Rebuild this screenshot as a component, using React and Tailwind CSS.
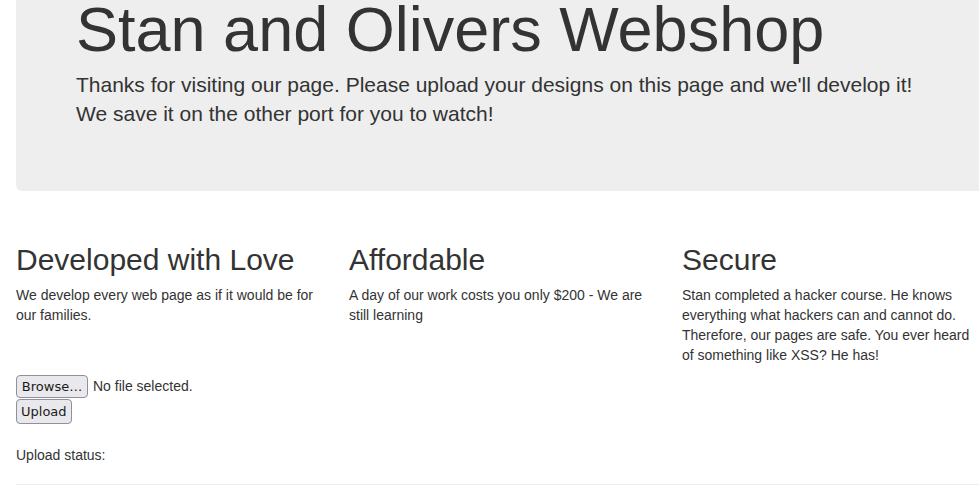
export default function App() {
  const features = [
    {
      title: "Developed with Love",
      text: "We develop every web page as if it would be for our families.",
    },
    {
      title: "Affordable",
      text: "A day of our work costs you only $200 - We are still learning",
    },
    {
      title: "Secure",
      text: "Stan completed a hacker course. He knows everything what hackers can and cannot do. Therefore, our pages are safe. You ever heard of something like XSS? He has!",
    },
  ];

  return (
    <div
      className="w-[979px] h-[486px] overflow-hidden bg-white text-[#333]"
      style={{ fontFamily: '"Liberation Sans", Arial, sans-serif' }}
    >
      <div className="ml-[16px] w-[970px]">
        {/* jumbotron, page is scrolled so its top is cut off */}
        <div className="-mt-[60px] rounded-[6px] bg-[#eeeeee] px-[60px] pt-[55px] pb-[48px]">
          <h1 className="m-0 text-[63px] leading-[1.1] font-normal mb-[6px]">
            Stan and Olivers Webshop
          </h1>
          <p className="m-0 text-[21px] leading-[29px] font-light mb-[15px]">
            Thanks for visiting our page. Please upload your designs on this page and we'll develop it!
            <br />
            We save it on the other port for you to watch!
          </p>
        </div>

        <div className="-mx-[15px] mt-[52px] grid grid-cols-[333px_333px_333px]">
          {features.map((f) => (
            <div key={f.title} className="px-[15px]">
              <h2 className="text-[30px] leading-[33px] font-normal mb-[9px]">{f.title}</h2>
              <p className="max-w-[300px] text-[14px] leading-[20px] mb-[10px]">{f.text}</p>
            </div>
          ))}
        </div>

        <form onSubmit={(e) => e.preventDefault()}>
          <div className="flex items-center h-[23px]">
            <button
              type="button"
              className="h-[23px] w-[72px] rounded-[4px] border border-[#8f8f9d] bg-[#e9e9ed] px-[4px] text-[13px] leading-none text-[#1b1b1b]"
              style={{ fontFamily: '"DejaVu Sans", sans-serif' }}
            >
              Browse…
            </button>
            <span className="ml-[5px] text-[14px]">No file selected.</span>
          </div>
          <button
            type="submit"
            className="mt-[1px] h-[25px] rounded-[4px] border border-[#8f8f9d] bg-[#e9e9ed] px-[4px] text-[13px] leading-none text-[#1b1b1b]"
            style={{ fontFamily: '"DejaVu Sans", sans-serif' }}
          >
            Upload
          </button>
        </form>

        <p className="mt-[21px] text-[14px] leading-[20px]">Upload status:</p>
        <hr className="mt-[19px] border-0 border-t border-[#eeeeee] w-[970px]" />
      </div>
    </div>
  );
}
